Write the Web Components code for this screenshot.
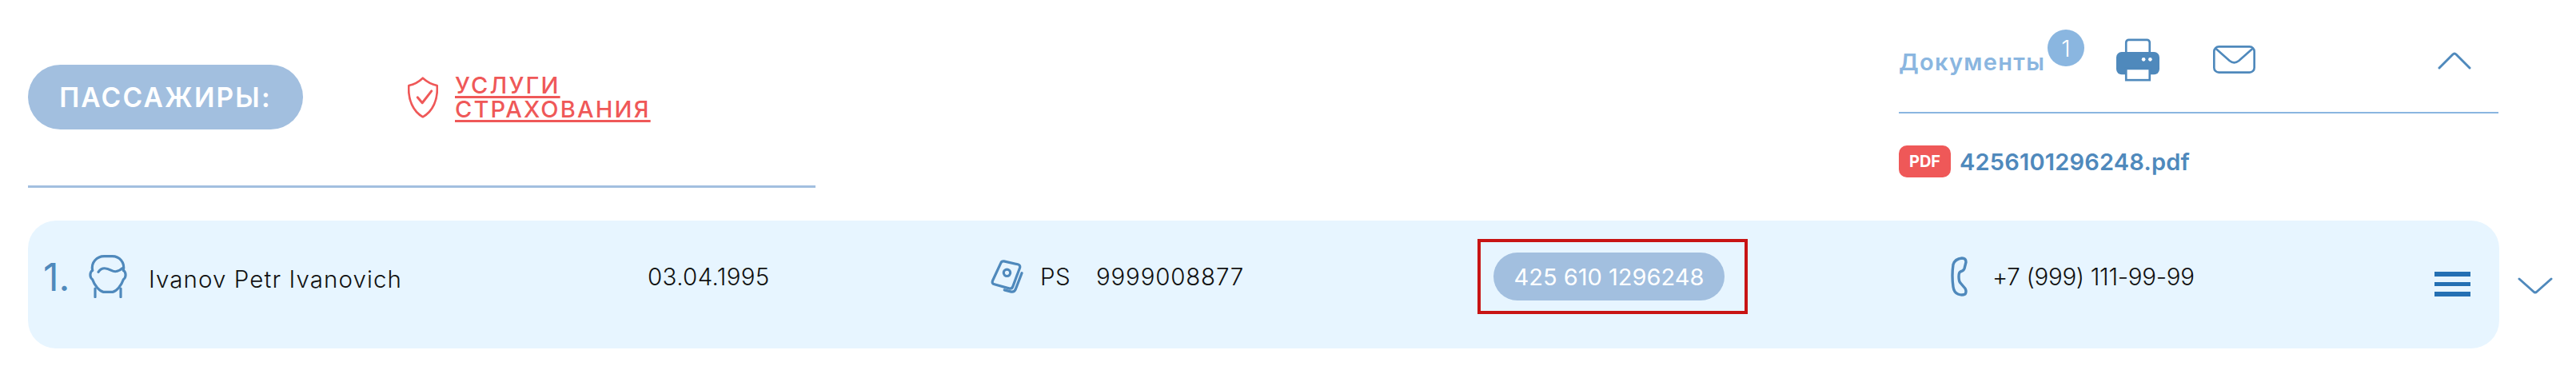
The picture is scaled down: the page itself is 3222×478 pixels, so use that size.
<!DOCTYPE html>
<html lang="ru">
<head>
<meta charset="utf-8">
<title>Пассажиры</title>
<style>
  html, body { margin: 0; background: #fff; }
  body { font-family: Inter, "Liberation Sans", sans-serif; color: #222; }
</style>
</head>
<body>
<passenger-section>
  <passenger-head slot="head">
    <span slot="title">ПАССАЖИРЫ:</span>
    <insurance-link slot="extra">УСЛУГИ СТРАХОВАНИЯ</insurance-link>
  </passenger-head>
  <docs-panel slot="docs" count="1" file="4256101296248.pdf"></docs-panel>
  <passenger-row slot="row"
    num="1." name="Ivanov Petr Ivanovich" birth="03.04.1995"
    doctype="PS" docnum="9999008877" ticket="425 610 1296248" phone="+7 (999) 111-99-99"></passenger-row>
</passenger-section>

<script>
const ICONS = {
  shield: `<svg width="38" height="52" viewBox="60 45 115 155" fill="none" stroke="#ef5858" stroke-width="8" stroke-linejoin="round" stroke-linecap="round"><path d="M117 49C100 65 82 74 64 77C60 130 80 175 117 196C155 175 175 130 171 77C153 74 135 65 117 49Z"/><path d="M97 122L115 143L150 98" stroke-width="9"/></svg>`,
  printer: `<svg width="54" height="54" viewBox="80 55 163 160"><rect x="117" y="59" width="89" height="60" rx="10" fill="#fff" stroke="#4f89bc" stroke-width="8"/><rect x="80" y="105" width="163" height="85" rx="20" fill="#4f89bc"/><circle cx="183" cy="133" r="7" fill="#fff"/><circle cx="208" cy="133" r="7" fill="#fff"/><rect x="117" y="168" width="89" height="43" fill="#fff" stroke="#4f89bc" stroke-width="8"/></svg>`,
  mail: `<svg width="53" height="35" viewBox="443 82 159 105" fill="none" stroke="#4f89bc" stroke-width="8" stroke-linecap="round"><rect x="447" y="86" width="151" height="97" rx="18"/><path d="M455 95L505 139Q522 153 540 139L590 95"/></svg>`,
  up: `<svg width="42" height="22" viewBox="0 0 42 22" fill="none" stroke="#4f89bc" stroke-width="3" stroke-linecap="round" stroke-linejoin="round"><path d="M2 20L19 3Q21 1 23 3L40 20"/></svg>`,
  down: `<svg width="44" height="21" viewBox="0 0 44 21" fill="none" stroke="#4f89bc" stroke-width="3" stroke-linecap="round" stroke-linejoin="round"><path d="M2 2L20 18Q22 20 24 18L42 2"/></svg>`,
  face: `<svg width="48" height="54" viewBox="0 0 144 162" fill="none" stroke="#4f89bc" stroke-width="9.5" stroke-linecap="round" stroke-linejoin="round"><path d="M14 58C8 28 30 5 58 5H88C116 5 136 28 130 58"/><path d="M14 58C3 66 3 84 14 92C22 115 40 136 55 139H90C105 136 122 115 130 92C141 84 141 66 130 58"/><path d="M24 126V158M120 126V158"/><path d="M36 64C50 42 70 50 85 58C100 66 116 60 126 50"/></svg>`,
  passport: `<svg width="41" height="42" viewBox="55 42 126 131" fill="none" stroke="#4f89bc" stroke-width="10" stroke-linecap="round" stroke-linejoin="round"><path d="M106 48L160 60Q171 63 168 74L141 146Q137 157 126 154L69 138Q58 135 62 124L94 55Q97 47 106 48Z"/><circle cx="118" cy="93" r="13"/><path d="M176 94L152 156Q147 169 135 167L108 160"/></svg>`,
  phone: `<svg width="21" height="50" viewBox="0 0 21 50" fill="none" stroke="#4f89bc" stroke-width="3.4" stroke-linejoin="round" stroke-linecap="round"><path d="M14 2Q19 2 19 7L17 15Q16 18 12 19Q10 20 10 25Q10 31 12 33L18 40Q20 44 18 47Q14 49 9 47Q4 45 3 38Q1 24 3 10Q5 3 14 2Z"/></svg>`,
  menu: `<svg width="45" height="31" viewBox="0 0 45 31" fill="#2470b3"><rect y="0" width="45" height="6"/><rect y="13" width="45" height="5"/><rect y="25" width="45" height="6"/></svg>`
};

class PassengerSection extends HTMLElement {
  constructor() {
    super();
    this.attachShadow({ mode: "open" }).innerHTML = `<style>
      :host { display: block; width: 3222px; height: 478px; box-sizing: border-box; padding-left: 35px; overflow: hidden; }
      .top { display: flex; justify-content: space-between; width: 3090px; height: 276px; }
    </style>
    <div class="top"><slot name="head"></slot><slot name="docs"></slot></div>
    <slot name="row"></slot>`;
  }
}

class PassengerHead extends HTMLElement {
  constructor() {
    super();
    this.attachShadow({ mode: "open" }).innerHTML = `<style>
      :host { display: block; width: 985px; height: 235px; box-sizing: border-box; padding-top: 81px; border-bottom: 3px solid #a2bfdf; }
      .bar { display: flex; align-items: center; gap: 131px; }
      .pill { display: flex; align-items: center; justify-content: center; width: 344px; height: 81px; border-radius: 41px;
        background: #a2bfdf; color: #fff; font-size: 33.5px; letter-spacing: 2.2px; font-weight: 600; }
    </style>
    <div class="bar"><div class="pill"><slot name="title"></slot></div><slot name="extra"></slot></div>`;
  }
}

class InsuranceLink extends HTMLElement {
  constructor() {
    super();
    this.attachShadow({ mode: "open" }).innerHTML = `<style>
      :host { display: flex; align-items: center; gap: 21px; color: #ef5858; }
      a { width: 262px; color: inherit; font-size: 29px; letter-spacing: 2.2px; line-height: 30px; font-weight: 500; text-decoration: underline; text-decoration-thickness: 3px; text-underline-offset: 3px; text-decoration-skip-ink: none; }
      svg { display: block; }
    </style>
    ${ICONS.shield}<a><slot></slot></a>`;
  }
}

class DocsPanel extends HTMLElement {
  constructor() {
    super();
    const count = this.getAttribute("count"), file = this.getAttribute("file");
    this.attachShadow({ mode: "open" }).innerHTML = `<style>
      :host { display: block; width: 750px; }
      .bar { display: flex; align-items: flex-start; height: 142px; box-sizing: border-box; padding-top: 37px; border-bottom: 2px solid #8ab6e0; }
      .title { margin-top: 23px; width: 186px; color: #8ab6e0; font-size: 29px; letter-spacing: 1.3px; line-height: 36px; font-weight: 600; }
      .badge { display: flex; align-items: center; justify-content: center; width: 46px; height: 46px; border-radius: 50%; background: #8ab6e0; color: #fff; font-size: 29px; font-weight: 300; }
      svg { display: block; }
      .print { margin: 11px 0 0 40px; }
      .mail { margin: 20px 0 0 67px; }
      .up { margin: 28px 0 0 228px; }
      .file { display: flex; align-items: center; gap: 11px; margin-top: 40px; }
      .pdf { display: flex; align-items: center; justify-content: center; width: 65px; height: 40px; border-radius: 10px; background: #ef5858; color: #fff; font-size: 20px; font-weight: 700; }
      .name { color: #4f89bc; font-size: 29px; letter-spacing: 0.2px; font-weight: 600; }
    </style>
    <div class="bar">
      <div class="title">Документы</div>
      <div class="badge">${count}</div>
      <div class="print">${ICONS.printer}</div>
      <div class="mail">${ICONS.mail}</div>
      <div class="up">${ICONS.up}</div>
    </div>
    <div class="file"><span class="pdf">PDF</span><span class="name">${file}</span></div>`;
  }
}

class TicketBox extends HTMLElement {
  constructor() {
    super();
    this.attachShadow({ mode: "open" }).innerHTML = `<style>
      :host { display: block; box-sizing: border-box; width: 338px; height: 94px; padding: 13px 25px 13px 16px; border: 4px solid #c81414; }
      div { display: flex; align-items: center; justify-content: center; height: 60px; border-radius: 30px; background: #a2bfdf; color: #fff; font-size: 29px; font-weight: 400; }
    </style><div><slot></slot></div>`;
  }
}

class PassengerRow extends HTMLElement {
  constructor() {
    super();
    const a = n => this.getAttribute(n);
    this.attachShadow({ mode: "open" }).innerHTML = `<style>
      :host { display: flex; align-items: flex-start; }
      .row { display: flex; align-items: center; box-sizing: border-box; width: 3091px; height: 160px; padding: 23px 36px 43px 19px; border-radius: 35px; background: #e7f5ff; font-size: 29.5px; font-weight: 300; color: #111; }
      svg { display: block; }
      .num { width: 57px; color: #4f89bc; font-size: 48px; font-weight: 400; }
      .name { width: 624px; margin: 6px 0 0 27px; letter-spacing: 1.1px; }
      .birth { width: 429px; letter-spacing: 0.35px; }
      .dt { width: 70px; margin-left: 21px; letter-spacing: 0.5px; }
      .dn { width: 477px; letter-spacing: 0.8px; }
      .ph { margin: 0 0 0 254px; }
      .tel { margin-left: 31px; letter-spacing: -0.3px; }
      .menu { margin: 19px 0 0 auto; }
      .down { margin: 71px 0 0 23px; }
    </style>
    <div class="row">
      <span class="num">${a("num")}</span>${ICONS.face}
      <span class="name">${a("name")}</span>
      <span class="birth">${a("birth")}</span>
      ${ICONS.passport}
      <span class="dt">${a("doctype")}</span><span class="dn">${a("docnum")}</span>
      <ticket-box>${a("ticket")}</ticket-box>
      <span class="ph">${ICONS.phone}</span><span class="tel">${a("phone")}</span>
      <span class="menu">${ICONS.menu}</span>
    </div>
    <div class="down">${ICONS.down}</div>`;
  }
}

customElements.define("passenger-section", PassengerSection);
customElements.define("passenger-head", PassengerHead);
customElements.define("insurance-link", InsuranceLink);
customElements.define("docs-panel", DocsPanel);
customElements.define("ticket-box", TicketBox);
customElements.define("passenger-row", PassengerRow);
</script>
</body>
</html>
